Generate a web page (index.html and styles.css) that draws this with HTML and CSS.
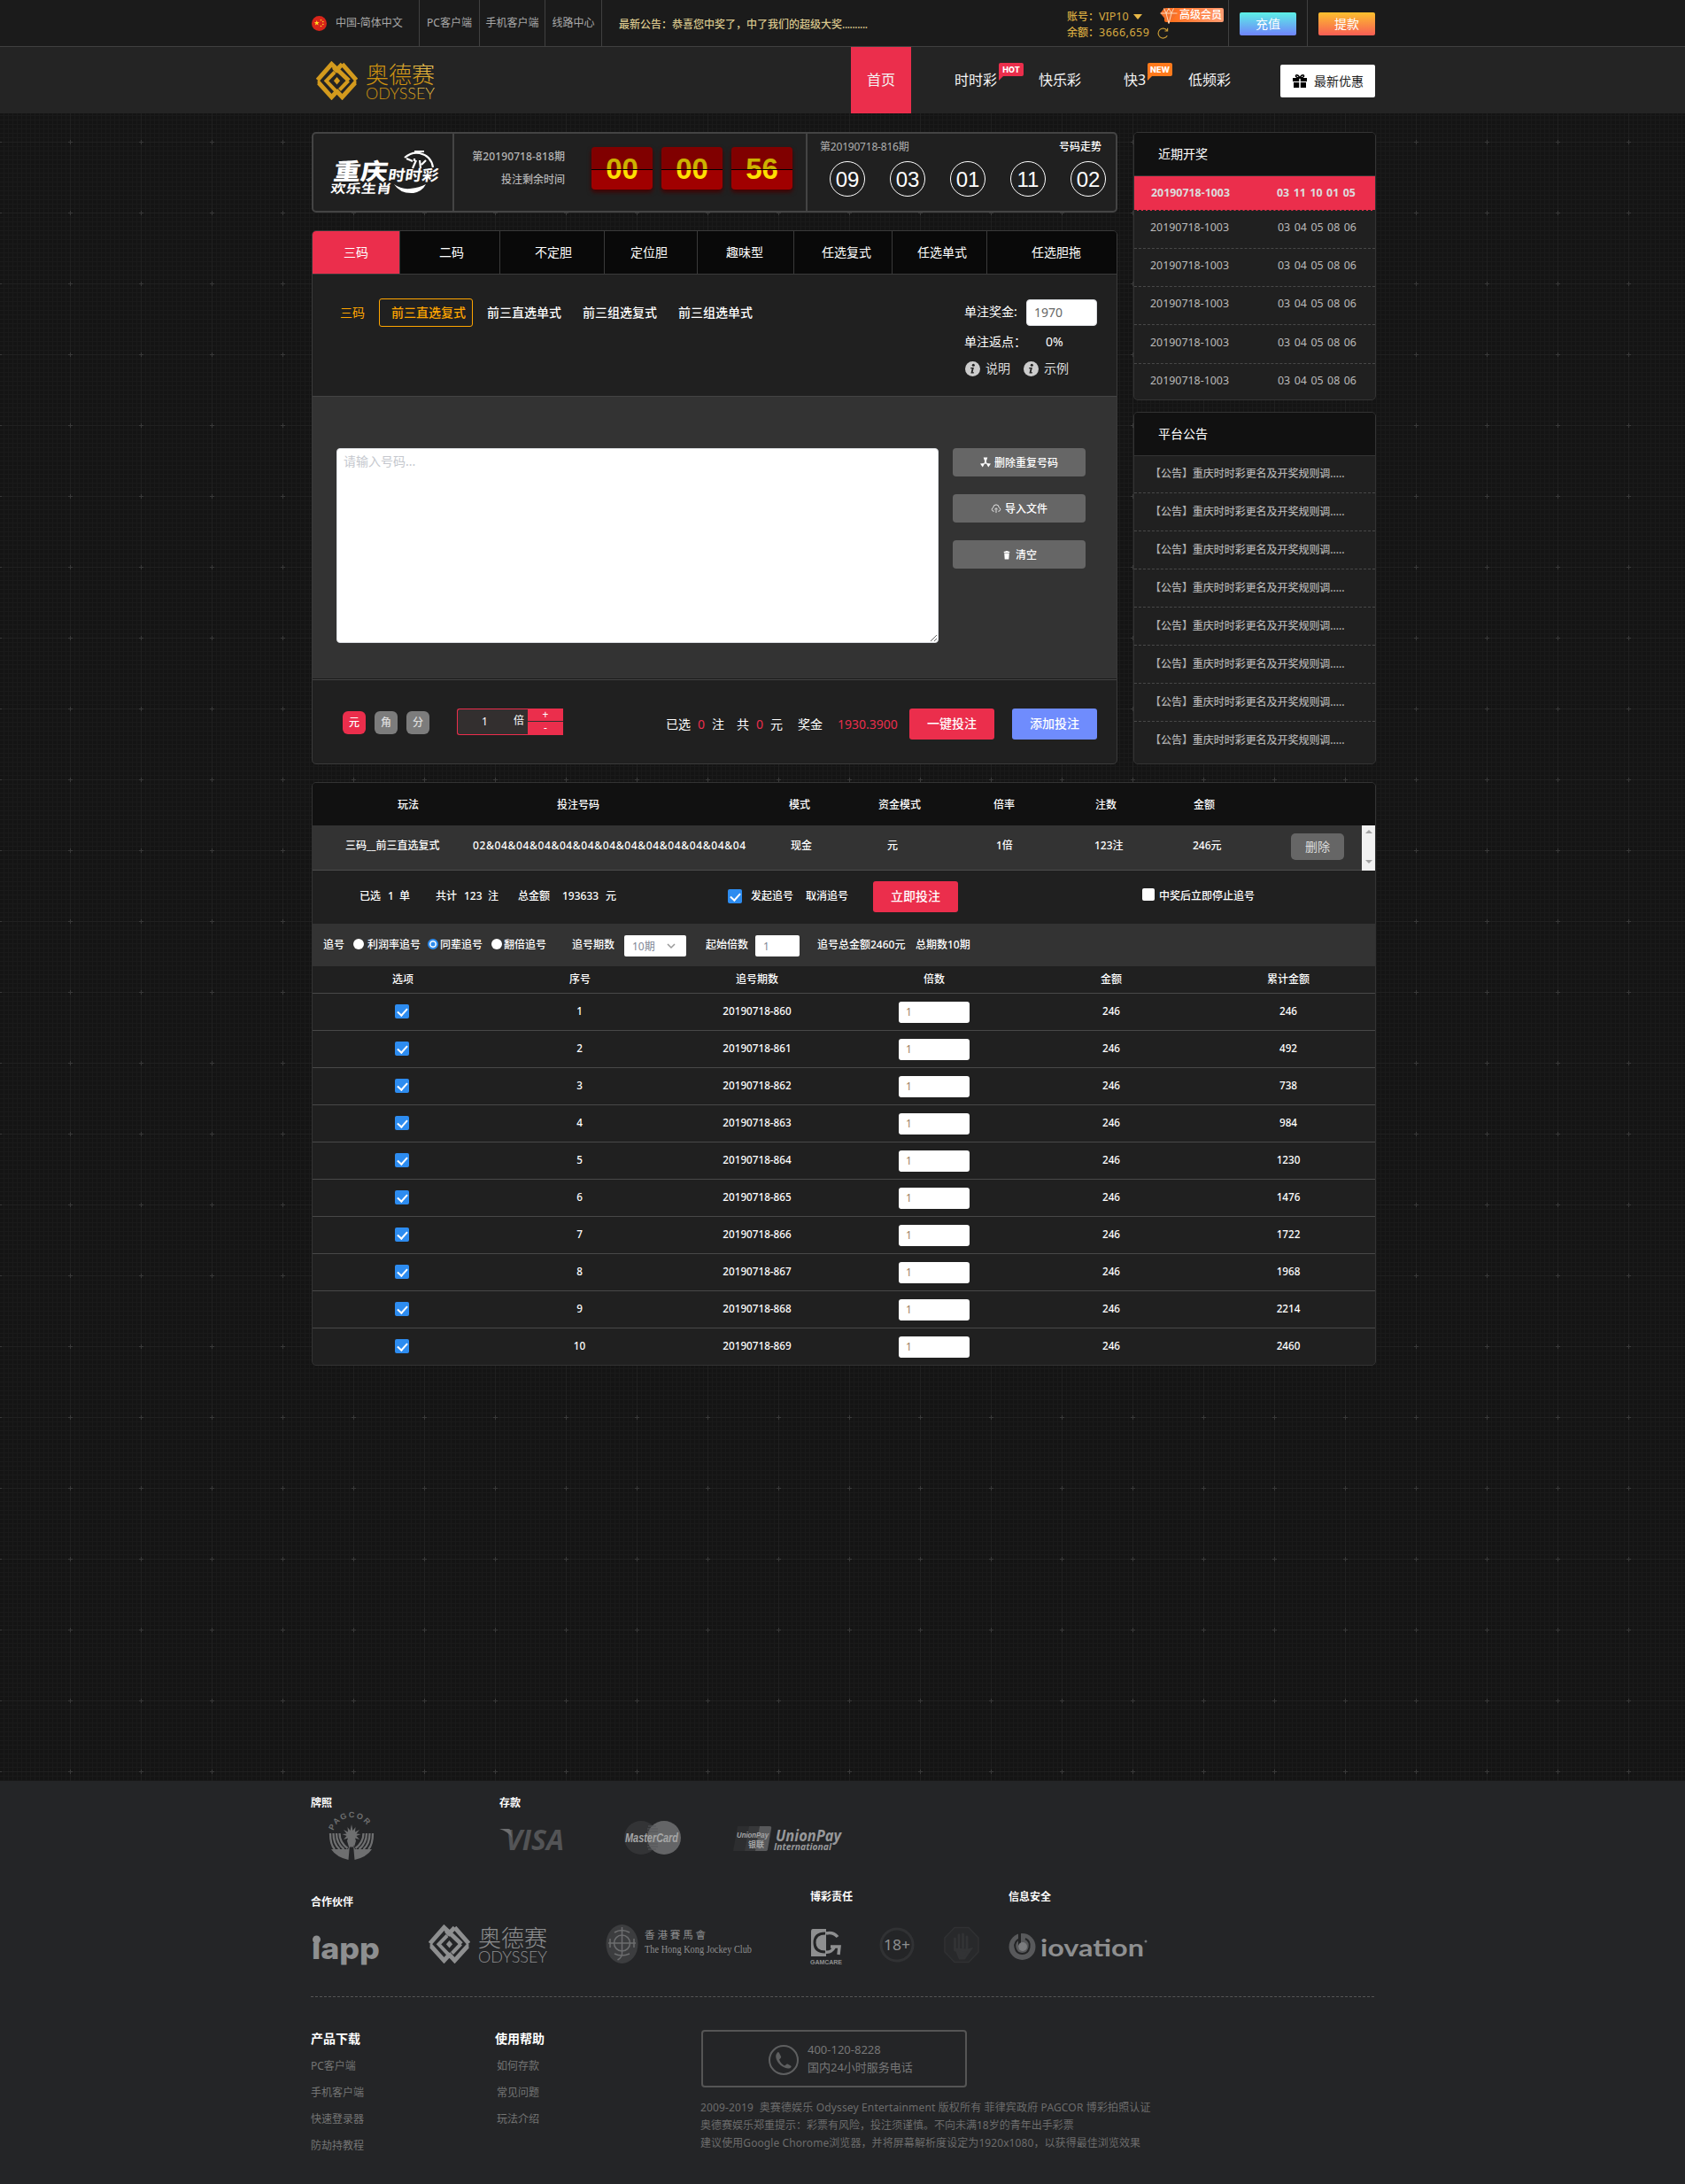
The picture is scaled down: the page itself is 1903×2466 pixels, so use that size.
FILE: index.html
```html
<!DOCTYPE html>
<html lang="zh-CN">
<head>
<meta charset="utf-8">
<title>奥德赛</title>
<link rel="stylesheet" href="styles.css">
</head>
<body>
<svg class="defs" width="0" height="0">
  <defs>
    <linearGradient id="gold" x1="0" y1="1" x2="1" y2="0"><stop offset="0.5" stop-color="#cf920f"/><stop offset="1" stop-color="#f7d774"/></linearGradient>
    <symbol id="mark" viewBox="0 0 47 44">
      <path fill="none" stroke="currentColor" stroke-width="5" d="M1.6 21.4 17.5 3.4 37 22 M20 7 23.500 11.500M29.500 3.400 45.400 21.400M21.500 12 29.500 3.400M1.600 24.600H3L17.500 40.600 24.500 33M22.500 33 29.500 40.600 44 24.600h1.400"/>
      <path fill="none" stroke="currentColor" stroke-width="4" d="M21 12.500 11.500 22.300 24 35.500M36.500 22 26.500 32.500"/>
      <path fill="currentColor" d="m23.500 18 3.600 4.200-3.600 4.200-3.600-4.200z"/>
    </symbol>
    <symbol id="info" viewBox="0 0 17 17"><circle cx="8.500" cy="8.500" r="8.500" fill="#ccc"/><circle cx="9.300" cy="4.300" r="1.500" fill="#222"/><path d="M6.300 7h3.600l-1.300 5.200h1.400l-.3 1.200H6.400l1.300-5.200H6z" fill="#222"/></symbol>
  </defs>
</svg>

<header>
  <div class="topbar">
    <div class="topbar-in">
      <div class="cell lang">
        <svg width="17" height="17" viewBox="0 0 17 17"><circle cx="8.500" cy="8.500" r="8.500" fill="#d8251a"/><path fill="#ffde22" d="m5.700 4.900.8 2 2.200.1-1.700 1.300.6 2.100-1.900-1.200-1.800 1.200.6-2.100L2.800 7 5 6.900z"/><g fill="#ffde22"><circle cx="10.500" cy="4.800" r=".8"/><circle cx="12.800" cy="6.500" r=".8"/><circle cx="12.800" cy="9.500" r=".8"/><circle cx="10.500" cy="11.500" r=".8"/></g></svg>
        <span>中国-简体中文</span>
      </div>
      <div class="cell">PC客户端</div>
      <div class="cell">手机客户端</div>
      <div class="cell">线路中心</div>
      <div class="notice">最新公告：恭喜您中奖了，中了我们的超级大奖<span>..........</span></div>
      <div class="cell account">
        <div>账号：<b>VIP10</b><i class="caret"></i></div>
        <div>余额：<b class="money">3666,659</b><svg width="13" height="13" viewBox="0 0 13 13"><path d="M11.300 9.300A5.500 5.500 0 1 1 11 3.300M11.600.8v3.200H8.400" fill="none" stroke="#c99c36" stroke-width="1.200"/></svg></div>
        <span class="member"><svg width="20" height="18" viewBox="0 0 20 18"><path d="M4.500.5h11L19.500 6 10 17.500.5 6z" fill="#f3702c"/><path d="M.5 6h19M4.500.5 7 6l3 11.500L13 6l2.500-5.500M7 6l3-5.500L13 6" fill="none" stroke="#ffd9b8"/></svg>高级会员</span>
      </div>
      <div class="cell"><a class="pill recharge">充值</a></div>
      <div class="cell last"><a class="pill withdraw">提款</a></div>
    </div>
  </div>
  <nav class="nav">
    <div class="nav-in">
      <svg class="logo" width="140" height="46" viewBox="0 0 140 46">
        <g color="#d39a1d"><use href="#mark" x="0" y="1" width="47" height="44"/></g>
        <text x="56" y="26" font-size="26" textLength="78" fill="url(#gold)" class="thin">奥德赛</text>
        <text x="56" y="44" font-size="17" textLength="78" lengthAdjust="spacingAndGlyphs" fill="url(#gold)" class="lato thin">ODYSSEY</text>
      </svg>
      <a class="active">首页</a>
      <a class="first">时时彩<span class="flag hot">HOT</span></a>
      <a>快乐彩</a>
      <a>快3<span class="flag new">NEW</span></a>
      <a>低频彩</a>
      <a class="promo"><svg width="16" height="15" viewBox="0 0 16 15"><path d="M0 4h7.200v4H0zM8.800 4H16v4H8.800zM1 9h6.200v6H1zM8.800 9H15v6H8.800z"/><path d="M7.500 4C3 4 2.500.8 4.500.8S7.500 3 8 4c.5-1 1.500-3.200 3.500-3.200S13 4 8.500 4" fill="none" stroke="#000" stroke-width="1.400"/></svg>最新优惠</a>
    </div>
  </nav>
</header>

<main>
  <div class="columns">
    <div class="left">
      <section class="draw">
        <div class="draw-logo">
          <svg width="126" height="56" viewBox="0 0 126 56" fill="#fff">
            <g transform="skewX(-8)"><text x="10" y="36.500" font-size="26" font-weight="900" textLength="61" lengthAdjust="spacingAndGlyphs">重庆</text><text x="72" y="37" font-size="17" font-weight="700" textLength="57" lengthAdjust="spacingAndGlyphs">时时彩</text><text x="9" y="51" font-size="14" font-weight="700" textLength="69" lengthAdjust="spacingAndGlyphs">欢乐生肖</text></g>
            <path d="M74 41q8 6 18 5 11-1 18-5-4 8-14 10-15 1-22-10z"/>
            <path d="M86 11Q94 4 103 6 116 9 118 22M97 4h11M88 12l7 3M97 12v3M99 14l-4 9M103 14l1 9M110 14l-5 5" fill="none" stroke="#fff" stroke-width="2.200"/>
          </svg>
        </div>
        <div class="draw-time">
          <div class="issue"><p>第20190718-818期</p><p>投注剩余时间</p></div>
          <div class="flip"><span>00</span></div><div class="flip"><span>00</span></div><div class="flip"><span>56</span></div>
        </div>
        <div class="draw-result">
          <div class="result-head"><span>第20190718-816期</span><b>号码走势</b></div>
          <div class="balls"><i>09</i><i>03</i><i>01</i><i>11</i><i>02</i></div>
        </div>
      </section>

      <section class="bet">
        <div class="tabs"><a class="on">三码</a><a>二码</a><a>不定胆</a><a>定位胆</a><a>趣味型</a><a>任选复式</a><a>任选单式</a><a>任选胆拖</a></div>
        <div class="modes">
          <div class="mode-list"><span class="label">三码</span><a class="on">前三直选复式</a><a>前三直选单式</a><a>前三组选复式</a><a>前三组选单式</a></div>
          <div class="bonus">
            <div class="line1"><span>单注奖金:</span><span class="field">1970</span></div>
            <div class="line2"><span>单注返点：</span><span>0%</span></div>
            <div class="line3"><svg width="17" height="17"><use href="#info"/></svg><span>说明</span><svg width="17" height="17"><use href="#info"/></svg><span>示例</span></div>
          </div>
        </div>
        <div class="entry">
          <textarea placeholder="请输入号码..."></textarea>
          <div class="tools">
            <a><svg width="12" height="12" viewBox="0 0 13 12" fill="#fff"><circle cx="6.500" cy="6.500" r="1.500"/><path d="M4 0h5L7.300 5H5.700zM5.700 7 3 12 0 7.500zM7.300 7l2.700 5 3-4.500z"/></svg>删除重复号码</a>
            <a><svg width="12" height="11" viewBox="0 0 13 11" fill="none" stroke="#eee"><path d="M4 8.500H3.500A2.300 2.300 0 0 1 3 4a3.500 3.500 0 0 1 7 0 2.300 2.300 0 0 1-.5 4.500H9M6.500 10.500V5M4.500 6.500l2-2 2 2"/></svg>导入文件</a>
            <a><svg width="12" height="11" viewBox="0 0 13 11" fill="#fff"><path d="M3 1.500h2V.5h3v1h2V3H3zM3.500 3.500h6L9 11H4z"/></svg>清空</a>
          </div>
        </div>
        <div class="submit">
          <div class="units"><a class="on">元</a><a>角</a><a>分</a></div>
          <div class="stepper"><span>1</span><span>倍</span><div><i>+</i><i>-</i></div></div>
          <div class="total"><span>已选</span><em>0</em><span>注</span><span>共</span><em>0</em><span>元</span><span>奖金</span><em>1930.3900</em></div>
          <a class="btn red">一键投注</a><a class="btn blue">添加投注</a>
        </div>
      </section>
    </div>

    <aside class="right">
      <section class="recent">
        <h3>近期开奖</h3>
        <div class="hit"><span>20190718-1003</span><span>03 11 10 01 05</span></div>
        <div><span>20190718-1003</span><span>03 04 05 08 06</span></div>
        <div><span>20190718-1003</span><span>03 04 05 08 06</span></div>
        <div><span>20190718-1003</span><span>03 04 05 08 06</span></div>
        <div><span>20190718-1003</span><span>03 04 05 08 06</span></div>
        <div><span>20190718-1003</span><span>03 04 05 08 06</span></div>
      </section>
      <section class="news">
        <h3>平台公告</h3>
        <p>【公告】重庆时时彩更名及开奖规则调.....</p>
        <p>【公告】重庆时时彩更名及开奖规则调.....</p>
        <p>【公告】重庆时时彩更名及开奖规则调.....</p>
        <p>【公告】重庆时时彩更名及开奖规则调.....</p>
        <p>【公告】重庆时时彩更名及开奖规则调.....</p>
        <p>【公告】重庆时时彩更名及开奖规则调.....</p>
        <p>【公告】重庆时时彩更名及开奖规则调.....</p>
        <p>【公告】重庆时时彩更名及开奖规则调.....</p>
      </section>
    </aside>
  </div>

  <section class="orders">
    <div class="ord-head"><span>玩法</span><span>投注号码</span><span>模式</span><span>资金模式</span><span>倍率</span><span>注数</span><span>金额</span></div>
    <div class="ord-row"><span>三码__前三直选复式</span><span><svg width="309" height="20"><text x="0" y="14" textLength="308">02&amp;04&amp;04&amp;04&amp;04&amp;04&amp;04&amp;04&amp;04&amp;04&amp;04&amp;04&amp;04</text></svg></span><span>现金</span><span>元</span><span>1倍</span><span>123注</span><span>246元</span><a>删除</a><i class="scroll"></i></div>
    <div class="ord-sum"><span>已选</span><span>1</span><span>单</span><span>共计</span><span>123</span><span>注</span><span>总金额</span><span>193633</span><span>元</span><i class="check"></i><span>发起追号</span><span>取消追号</span><a class="btn red">立即投注</a><i class="box"></i><span>中奖后立即停止追号</span></div>
    <div class="ord-opt"><span>追号</span><i class="radio"></i><span>利润率追号</span><i class="radio sel"></i><span>同辈追号</span><i class="radio"></i><span>翻倍追号</span><span>追号期数</span><span class="select">10期<svg width="10" height="6" viewBox="0 0 10 6"><path d="m1 1 4 4 4-4" fill="none" stroke="#999" stroke-width="1.500"/></svg></span><span>起始倍数</span><span class="num">1</span><span>追号总金额2460元</span><span>总期数10期</span></div>
    <div class="chase head"><span>选项</span><span>序号</span><span>追号期数</span><span>倍数</span><span>金额</span><span>累计金额</span></div>
    <div class="chase"><i class="check"></i><span>1</span><span>20190718-860</span><span class="mult">1</span><span>246</span><span>246</span></div>
    <div class="chase"><i class="check"></i><span>2</span><span>20190718-861</span><span class="mult">1</span><span>246</span><span>492</span></div>
    <div class="chase"><i class="check"></i><span>3</span><span>20190718-862</span><span class="mult">1</span><span>246</span><span>738</span></div>
    <div class="chase"><i class="check"></i><span>4</span><span>20190718-863</span><span class="mult">1</span><span>246</span><span>984</span></div>
    <div class="chase"><i class="check"></i><span>5</span><span>20190718-864</span><span class="mult">1</span><span>246</span><span>1230</span></div>
    <div class="chase"><i class="check"></i><span>6</span><span>20190718-865</span><span class="mult">1</span><span>246</span><span>1476</span></div>
    <div class="chase"><i class="check"></i><span>7</span><span>20190718-866</span><span class="mult">1</span><span>246</span><span>1722</span></div>
    <div class="chase"><i class="check"></i><span>8</span><span>20190718-867</span><span class="mult">1</span><span>246</span><span>1968</span></div>
    <div class="chase"><i class="check"></i><span>9</span><span>20190718-868</span><span class="mult">1</span><span>246</span><span>2214</span></div>
    <div class="chase"><i class="check"></i><span>10</span><span>20190718-869</span><span class="mult">1</span><span>246</span><span>2460</span></div>
  </section>
</main>

<footer>
  <div class="foot-in">
    <div class="brands top">
      <div><h4>牌照</h4>
        <svg class="pagcor" width="54" height="54" viewBox="0 0 54 54">
          <path id="arc" d="M6 22A21.500 21.500 0 0 1 48 22" fill="none"/>
          <text font-size="9" font-weight="700" letter-spacing="1.600" fill="#6e6f70" class="latin"><textPath href="#arc" startOffset="2">PAGCOR</textPath></text>
          <path fill="#6e6f70" d="m27 13 1.500 7 3-4-.5 5.500 5-2.500-3.500 4.500 5 .5-5 2 3.500 4-5-1.500 1 3-2 7-6 0-2-7 1-3-5 1.500 3.500-4-5-2 5-.5-3.500-4.500 5 2.500-.5-5.500 3 4zM4 41l19 0 2-5-1.500 17Q10 50 4 41zM50 41H31l-2-5 1.500 17Q44 50 50 41z"/>
          <path fill="none" stroke="#6e6f70" stroke-width="2.300" d="M3 23q0 13 5 18M6.500 23q0 12 7 18M10 23q0 11 8.500 18M13.500 23q0 10 9 17M51 23q0 13-5 18M47.500 23q0 12-7 18M44 23q0 11-8.500 18M40.500 23q0 10-9 17"/>
        </svg>
      </div>
      <div><h4>存款</h4>
        <div class="logos">
          <svg width="74" height="26" viewBox="0 0 74 26"><text x="7" y="25" font-size="33" font-weight="700" font-style="italic" textLength="66" lengthAdjust="spacingAndGlyphs" fill="#535456" class="open">VISA</text><path d="M0 1h10q3 0 3 4l1 6Q10 4 0 1z" fill="#6d6e70"/></svg>
          <svg width="66" height="40" viewBox="0 0 66 40"><circle cx="20" cy="20" r="19" fill="#333436"/><circle cx="46" cy="20" r="19" fill="#646567"/><path d="M28 7h9M27 10h12M27 13h12M27 27h12M27 30h12M28 33h9" stroke="#55565a"/><text x="2" y="25" font-size="14" font-weight="700" font-style="italic" textLength="60" lengthAdjust="spacingAndGlyphs" fill="#a4a5a6" class="latin">MasterCard</text></svg>
          <svg width="126" height="32" viewBox="0 0 126 32"><path d="M6 2h16l-5 28H1z" fill="#2d2e30"/><path d="M19 2h14l-5 28H14z" fill="#37383a"/><path d="M31 2h11q3 0 2 3l-4 23q0 2-3 2H26z" fill="#58595b"/><text x="5" y="15" font-size="8.500" font-weight="700" font-style="italic" textLength="36" lengthAdjust="spacingAndGlyphs" fill="#a4a5a6" class="latin">UnionPay</text><text x="18" y="26" font-size="9" font-weight="700" textLength="18" fill="#a4a5a6">银联</text><text x="49" y="19" font-size="18" font-weight="700" font-style="italic" textLength="74" lengthAdjust="spacingAndGlyphs" fill="#97989a" class="open">UnionPay</text><text x="47" y="29" font-size="10.500" font-weight="700" font-style="italic" textLength="65" lengthAdjust="spacingAndGlyphs" fill="#97989a" class="open">International</text></svg>
        </div>
      </div>
    </div>
    <div class="brands mid">
      <div class="partner"><h4>合作伙伴</h4>
        <div class="logos">
          <svg width="78" height="34" viewBox="0 0 78 34"><circle cx="5.500" cy="4" r="4.500" fill="#8e8f90"/><text x="0" y="26" font-size="33" font-weight="800" textLength="77" lengthAdjust="spacingAndGlyphs" fill="#8e8f90" class="inter">ıapp</text></svg>
          <svg width="136" height="46" viewBox="0 0 136 46"><g color="#8e8f90"><use href="#mark" x="0" y="1" width="47" height="44"/></g><text x="56" y="26" font-size="26" textLength="78" fill="#8e8f90" class="thin">奥德赛</text><text x="56" y="44" font-size="17" textLength="78" lengthAdjust="spacingAndGlyphs" fill="#8e8f90" class="lato thin">ODYSSEY</text></svg>
          <svg width="168" height="46" viewBox="0 0 168 46"><ellipse cx="18.500" cy="23" rx="18" ry="22" fill="#3c3d3f"/><g fill="none" stroke="#6c6d6f" stroke-width="1.500"><circle cx="18.500" cy="22" r="9"/><path d="M18.500 4v30q0 4-5 7M3 22h31M5 17v10M32 17v10M10 10q8-5 17 0M10 34q8 4 17 0"/></g><text x="44" y="17" font-size="11.500" textLength="69" fill="#8e8f90" class="hant">香港賽馬會</text><text x="44" y="33" font-size="13" textLength="121" lengthAdjust="spacingAndGlyphs" fill="#8e8f90" class="serif">The Hong Kong Jockey Club</text></svg>
        </div>
      </div>
      <div class="duty"><h4>博彩责任</h4>
        <div class="logos">
          <svg width="38" height="42" viewBox="0 0 38 42"><path d="M3 1h15v31H1V4q0-3 2-3z" fill="#8e8f90"/><path d="M17 6Q5 6 5 16.500T17 27" fill="none" stroke="#232425" stroke-width="3"/><path d="M18 6q8-2 13 4M17 27q7 1 10-5M23 21h10l-1 9" fill="none" stroke="#8e8f90" stroke-width="3.500"/><text x="0" y="41" font-size="8" font-weight="700" textLength="36" lengthAdjust="spacingAndGlyphs" fill="#8e8f90" class="latin">GAMCARE</text></svg>
          <svg width="40" height="42" viewBox="0 0 40 42"><circle cx="20" cy="21" r="18" fill="none" stroke="#313234" stroke-width="3"/><text x="5" y="27" font-size="17" textLength="30" lengthAdjust="spacingAndGlyphs" fill="#8e8f90">18+</text></svg>
          <svg width="40" height="42" viewBox="0 0 40 42"><path d="M12 1.500h16L39 13v16L28 40.500H12L1 29V13z" fill="#28292b" stroke="#303133" stroke-width="1.500"/><path d="M12.500 27V14M17 24V10M21.500 24V9M26 25V12M14 26l4 10h5l7-10-4 1z" fill="#323335" stroke="#323335" stroke-width="2.800" stroke-linecap="round"/></svg>
        </div>
      </div>
      <div class="safe"><h4>信息安全</h4>
        <svg width="158" height="34" viewBox="0 0 158 34"><circle cx="15.500" cy="17" r="15" fill="#58595b"/><path d="M13 8Q6 11 7.500 18T15.500 25 23.500 18 19 8" fill="none" stroke="#232425" stroke-width="2"/><path d="M11 1h3v18h-3z" fill="#232425"/><circle cx="16" cy="17" r="5" fill="#7b7c7e"/><text x="36" y="28" font-size="27" font-weight="700" textLength="117" lengthAdjust="spacingAndGlyphs" fill="#8e8f90" class="lato">iovation</text><circle cx="155" cy="11" r="1.500" fill="#77787a"/></svg>
      </div>
    </div>
    <div class="foot-bottom">
      <div class="links"><h5>产品下载</h5><a>PC客户端</a><a>手机客户端</a><a>快速登录器</a><a>防劫持教程</a></div>
      <div class="links help"><h5>使用帮助</h5><a>如何存款</a><a>常见问题</a><a>玩法介绍</a></div>
      <div class="contact">
        <div class="phone"><svg width="34" height="34" viewBox="0 0 34 34"><circle cx="17" cy="17" r="16" fill="none" stroke="#5e5f60" stroke-width="2"/><path d="M10 8.500q-3 3-1 8t7 8 8.500 1.500q2-1.500.5-2.500l-3.500-2q-1-.5-2 1l-1.500 1q-4-2-6-7l1.500-1.500q1-1 .5-2L12 9q-1-1.500-2-.5z" fill="#5e5f60"/></svg><div><p>400-120-8228</p><p>国内24小时服务电话</p></div></div>
        <p class="rights">2009-2019&nbsp; 奥赛德娱乐 Odyssey Entertainment 版权所有 菲律宾政府 PAGCOR 博彩拍照认证</p>
        <p>奥德赛娱乐郑重提示：彩票有风险，投注须谨慎。不向未满18岁的青年出手彩票</p>
        <p class="browser">建议使用Google Chorome浏览器，并将屏幕解析度设定为1920x1080，以获得最佳浏览效果</p>
      </div>
    </div>
  </div>
</footer>
</body>
</html>
```
FILE: styles.css
```css
* { box-sizing: border-box; margin: 0; padding: 0; }
body {
  font: 12px/20px "Noto Sans", "Noto Sans CJK SC", sans-serif;
  color: #fff;
  white-space: nowrap;
  background: #141414 url("data:image/svg+xml,%3Csvg xmlns='http://www.w3.org/2000/svg' width='80' height='80'%3E%3Cdefs%3E%3Cpattern id='p' width='5' height='5' patternUnits='userSpaceOnUse'%3E%3Cpath d='M0 0h5v1H0zM4 0h1v5H4z' fill='%231a1a1a'/%3E%3C/pattern%3E%3C/defs%3E%3Cpath fill='url(%23p)' d='M0 0h80v80H0z'/%3E%3Cpath d='M0 0h80v1H0zM79 0h1v80h-1z' fill='%23202020'/%3E%3Cpath d='M77 0h3v1h-3zM0 0h2v1H0zM79 0h1v3h-1zM79 78h1v2h-1z' fill='%233a3a3a'/%3E%3C/svg%3E") 0 0 / 80px 80px;
}
i, em { font-style: normal; }
.defs { position: absolute; }
svg { display: block; flex: none; overflow: visible; }
.latin { font-family: "Liberation Sans", sans-serif; }
.open { font-family: "Open Sans", sans-serif; }
.inter { font-family: Inter, sans-serif; }
.lato { font-family: Lato, sans-serif; }
.serif { font-family: "Liberation Serif", serif; }
.hant { font-family: "Noto Sans CJK TC", sans-serif; }
.thin { font-weight: 300; }

/* top bar */
.topbar { height: 53px; background: #1b1b1b; border-bottom: 1px solid #404040; color: #a9a9a9; }
.topbar-in { margin-left: 352px; display: grid; grid-template-columns: 122px 68px 74px 64px 525px 183px 89px 76px; height: 52px; }
.cell { display: flex; align-items: center; justify-content: center; border-right: 1px solid #404040; }
.cell.last { border: 0; justify-content: flex-end; }
.cell.lang { justify-content: flex-start; gap: 10px; }
.notice { padding: 18px 0 0 19px; color: #d8c68c; font-weight: 500; }
.notice span { letter-spacing: -.4px; }
.cell.account { position: relative; flex-direction: column; align-items: flex-start; justify-content: flex-start; padding-top: 10px; color: #d9ab41; line-height: 18px; font-weight: 500; }
.account div { display: flex; align-items: center; }
.account b { font-weight: 400; font-size: 12.5px; }
.account .money { width: 57px; letter-spacing: .5px; margin-right: 9px; }
.caret { border: 5px solid transparent; border-top: 6px solid #e8b847; border-bottom: 0; margin-left: 5px; }
.member { position: absolute; left: 110px; top: 9px; width: 67px; height: 16px; border-radius: 2px; padding-left: 17px; color: #fff; font-weight: 500; line-height: 16px; font-size: 12px; background: linear-gradient(90deg, #ff6a12, #ff9c72); }
.member svg { position: absolute; left: -5px; top: 0; }
.pill { width: 64px; height: 26px; margin-top: 2px; border-radius: 2px; font-size: 14px; line-height: 26px; text-align: center; color: #fff; }
.recharge { background: linear-gradient(#5cf0e6, #7083fb); }
.withdraw { background: linear-gradient(#fcc02e, #f85d55); }

/* navigation */
.nav { height: 75px; background: #242424; }
.nav-in { margin-left: 352px; height: 75px; display: grid; grid-template-columns: 609px 68px 144px 96px 73px 104px 107px; font-size: 16px; line-height: 75px; }
.logo { margin: 15px 0 0 5px; }
.nav .active { background: #eb2e4c; text-align: center; }
.nav .first { padding-left: 49px; }
.nav a { color: #f4f4f4; position: relative; }
.flag { position: absolute; top: 18px; width: 28px; height: 15px; border-radius: 2px; font: 800 9px/15px Inter, sans-serif; text-align: center; }
.flag::after { content: ""; position: absolute; left: 0; top: 14px; border: 3px solid; border-right-color: transparent; border-bottom-color: transparent; }
.hot { left: 99px; background: #eb2e4c; color: #fff; }
.new { left: 27px; background: #ff7a1c; color: #fff; }
.hot::after { border-top-color: #eb2e4c; border-left-color: #eb2e4c; }
.new::after { border-top-color: #ff7a1c; border-left-color: #ff7a1c; }
.nav .promo { align-self: start; margin-top: 20px; height: 37px; background: #fff; border-radius: 2px; color: #222; font-size: 14px; line-height: 36px; display: flex; align-items: center; gap: 8px; padding-left: 14px; }

main { height: 1883px; padding: 21px 0 0 352px; }
.columns { display: flex; gap: 18px; }
.left { width: 910px; display: flex; flex-direction: column; gap: 20px; }
.right { width: 274px; display: flex; flex-direction: column; gap: 13px; }

/* current draw */
.draw { height: 91px; border: 2px solid #444; border-radius: 5px; background: #202020; display: grid; grid-template-columns: 159px 399px 348px; }
.draw-logo { border-right: 2px solid #444; padding: 16px 0 0 17px; }
.draw-time { border-right: 2px solid #444; display: flex; }
.issue { width: 125px; margin-right: 30px; padding-top: 15px; text-align: right; color: #b5b5b5; font-weight: 500; }
.issue p { height: 26px; line-height: 22px; }
.issue p:first-child { letter-spacing: .1px; }
.flip { position: relative; width: 69px; height: 48px; margin: 15px 10px 0 0; border-radius: 4px; background: #a00000; box-shadow: 0 3px 5px #400; text-align: center; color: #ffdf00; font: bold 33px/49px "Liberation Sans", sans-serif; overflow: hidden; }
.flip::after { content: ""; position: absolute; inset: 0 0 auto; height: 25px; background: rgba(0,0,0,.2); border-bottom: 1px solid #000; }
.result-head { display: flex; justify-content: space-between; padding: 5px 16px 0 14px; height: 24px; color: #b0b0b0; }
.result-head span { letter-spacing: -.2px; }
.result-head b { color: #fff; font-weight: 500; }
.balls { display: flex; gap: 28px; padding: 7px 0 0 25px; }
.balls i { width: 40px; height: 40px; border: 1px solid #fff; border-radius: 50%; text-align: center; font: 24px/39px "Liberation Sans", sans-serif; }

/* bet panel */
.bet { height: 603px; border: 1px solid #3a3a3a; border-radius: 5px; background: #202020; overflow: hidden; font-size: 14px; }
.tabs { display: grid; grid-template-columns: 99px 113px 118px 105px 109px 111px 107px 146px; height: 49px; line-height: 48px; background: #090909; border-bottom: 1px solid #3a3a3a; }
.tabs a { border-right: 1px solid #3a3a3a; padding-left: 31px; }
.tabs a:first-child { padding-left: 35px; background: #eb2e4c; }
.tabs a:nth-child(2) { padding-left: 44px; }
.tabs a:nth-child(3) { padding-left: 39px; }
.tabs a:nth-child(4) { padding-left: 29px; }
.tabs a:nth-child(5) { padding-left: 32px; }
.tabs a:nth-child(7) { padding-left: 28px; }
.tabs a:last-child { padding-left: 50px; border: 0; }
.modes { display: flex; justify-content: space-between; height: 138px; border-bottom: 1px solid #444; padding: 27px 22px 0 31px; }
.mode-list { display: flex; height: 32px; line-height: 31px; }
.mode-list a { width: 108px; padding-left: 15px; font-weight: 500; }
.mode-list .label { width: 44px; color: #ffa500; }
.mode-list .on { width: 106px; margin-right: 1px; border: 1px solid #ffa500; border-radius: 3px; padding-left: 13px; line-height: 29px; color: #ffa500; }
.bonus { width: 150px; padding-top: 1px; }
.bonus div { display: flex; }
.line1 > span:first-child { width: 70px; line-height: 28px; }
.field { width: 80px; height: 30px; border-radius: 4px; background: #fff; border: 1px solid #dcdee2; color: #666; padding-left: 8px; line-height: 28px; }
.line2 { padding-top: 8px; }
.line2 span:first-child { width: 92px; }
.line3 { padding: 12px 0 0 1px; color: #ddd; line-height: 16px; }
.line3 span { width: 43px; margin-left: 6px; }
.entry { height: 319px; border-bottom: 1px solid #1c1c1c; background: #333; padding: 58px 0 0 27px; display: flex; gap: 16px; }
.entry textarea { width: 680px; height: 220px; border: 1px solid #dcdee2; border-radius: 4px; background: #fff; padding: 4px 7px; font: inherit; }
.entry textarea::placeholder { color: #c5c8ce; }
.tools { display: grid; grid-auto-rows: 32px; gap: 20px; width: 150px; }
.tools a { background: #666; border-radius: 4px; font-size: 12px; font-weight: 500; line-height: 31px; display: flex; align-items: center; justify-content: center; gap: 4px; }
.submit { border-top: 1px solid #444; height: 95px; display: flex; padding-left: 34px; }
.units { display: flex; gap: 10px; padding-top: 35px; width: 129px; }
.units a { width: 26px; height: 26px; border-radius: 6px; background: #7c7c7c; color: #ddd; font-size: 12px; font-weight: 500; line-height: 25px; text-align: center; }
.units .on { background: #eb2e4c; color: #fff; }
.stepper { display: flex; width: 120px; height: 30px; margin-top: 32px; border: 1px solid #eb2e4c; border-right: 0; border-radius: 3px 0 0 3px; background: #332f2f; font-size: 12px; line-height: 28px; }
.stepper > span { width: 36px; padding-left: 27px; }
.stepper > span:nth-child(2) { width: 43px; padding-left: 27px; line-height: 26px; }
.stepper div { width: 40px; display: flex; flex-direction: column; gap: 1px; margin-top: -1px; }
.stepper i { height: 14.5px; background: #eb2e4c; text-align: center; line-height: 13px; }
.total { margin-left: 116px; width: 275px; padding-top: 40px; display: grid; grid-template-columns: 36px 16px 28px 22px 16px 31px 45px 81px; }
.total em { color: #eb2e4c; }
.btn { width: 96px; height: 35px; border-radius: 3px; text-align: center; font-size: 14px; font-weight: 500; line-height: 33px; color: #fff; }
.submit .btn { margin: 32px 20px 0 0; }
.red { background: #eb2e4c; }
.blue { background: #6f8cfd; }

/* side panels */
.recent, .news { border: 1px solid #333; border-radius: 5px; background: #202020; overflow: hidden; }
.recent { height: 303px; }
.news { height: 398px; }
h3 { height: 49px; background: #111; border-bottom: 1px solid #333; padding-left: 27px; font-size: 14px; font-weight: 400; line-height: 48px; }
.recent div { height: 43px; padding: 9px 0 0 18px; border-bottom: 1px dashed #484848; display: grid; grid-template-columns: 144px 1fr; font-size: 12.4px; color: #bbb; }
.recent div span:last-child { word-spacing: 1.3px; }
.recent div.hit { height: 39px; padding-top: 9px; background: #eb2e4c; border-color: #202020; font-weight: 700; color: #dcdcdc; grid-template-columns: 142px 1fr; padding-left: 19px; }
.recent div:last-child, .news p:last-child { border: 0; }
.recent div:nth-child(6) { height: 44px; padding-top: 10px; }
.news p { height: 43px; padding: 11px 0 0 18px; border-bottom: 1px dashed #484848; color: #b0b0b0; font-weight: 500; letter-spacing: -.04px; }
.news p:nth-child(2) { height: 42px; padding-top: 10px; }

/* orders */
.orders { width: 1202px; height: 659px; margin-top: 20px; border: 1px solid #333; border-radius: 5px; background: #202020; overflow: hidden; font-weight: 500; }
.ord-head { height: 48px; background: #111; display: grid; padding-left: 96px; grid-template-columns: 180px 262px 101px 130px 115px 111px 60px; line-height: 49px; }
.ord-row { height: 51px; background: #333; border-bottom: 1px solid #4c4c4c; display: grid; padding-left: 37px; grid-template-columns: 144px 359px 109px 123px 111px 111px 111px 80px 15px; line-height: 45px; }
.ord-row svg { margin-top: 13px; fill: #fff; }
.ord-row a { width: 60px; height: 30px; margin-top: 9px; border-radius: 5px; background: #666; color: #ddd; font-size: 14px; line-height: 29px; text-align: center; font-weight: 400; }
.scroll { position: relative; height: 51px; background: #f1f1f1; }
.scroll::before, .scroll::after { content: ""; position: absolute; left: 4px; top: 5px; border: 4px solid transparent; border-top: 0; border-bottom: 4px solid #a3a3a3; }
.scroll::after { top: 39px; border-bottom: 0; border-top: 4px solid #a3a3a3; }
.ord-sum { height: 60px; display: grid; padding-left: 53px; line-height: 58px; grid-template-columns: 32px 13px 41px 32px 27px 34px 50px 49px 138px 26px 62px 76px 304px 19px 1fr; }
.ord-sum .btn { margin-top: 12px; line-height: 33px; }
.check { display: block; width: 16px; height: 16px; border-radius: 2px; background: #2d8cf0; position: relative; }
.check::after { content: ""; position: absolute; left: 5px; top: 2px; width: 5px; height: 9px; border: solid #fff; border-width: 0 2px 2px 0; transform: rotate(42deg); }
.ord-sum .check { margin-top: 21px; }
.box { width: 14px; height: 14px; margin-top: 20px; border-radius: 2px; background: #fff; }
.ord-opt { height: 48px; background: #333; display: grid; padding-left: 12px; line-height: 48px; grid-template-columns: 34px 16px 68px 14px 58px 14px 77px 59px 92px 56px 70px 111px 1fr; }
.radio { width: 12px; height: 12px; margin-top: 17px; border-radius: 50%; background: #fff; }
.radio.sel { border: 2px solid #2d8cf0; box-shadow: inset 0 0 0 1.5px #fff; background: #2d8cf0; }
.select, .num { display: flex; justify-content: space-between; align-items: center; margin-top: 13px; height: 24px; border-radius: 2px; background: #fff; color: #808695; line-height: 23px; font-weight: 400; }
.select { width: 70px; padding: 0 12px 0 9px; }
.num { width: 50px; padding-left: 9px; }
.chase { display: grid; grid-template-columns: repeat(6, 200px); height: 42px; border-bottom: 1px solid #484848; line-height: 38px; text-align: center; font-size: 11.7px; }
.chase:last-child { border: 0; }
.chase > span:nth-child(2) { padding-left: 3px; }
.chase > span:nth-child(n+3) { padding-left: 4px; }
.chase.head { height: 31px; line-height: 29px; font-size: 12px; padding-left: 2px; }
.chase.head > span { padding: 0; }
.chase .check { margin: 12px 0 0 93px; }
.chase > span.mult { width: 80px; height: 24px; margin: 9px 0 0 62px; border-radius: 3px; background: #fff; color: #a08060; font-size: 12px; font-weight: 400; text-align: left; padding-left: 8px; line-height: 23px; }

/* footer */
footer { height: 455px; background: #242527; }
.foot-in { margin-left: 351px; width: 1202px; }
.foot-in h4 { font-size: 12px; font-weight: 700; line-height: 20px; }
.brands { display: grid; }
.brands.top { grid-template-columns: 213px 1fr; padding-top: 15px; height: 112px; }
.pagcor { margin: 1px 0 0 19px; }
.logos { display: flex; align-items: flex-start; }
.top .logos { padding-top: 9px; }
.top .logos svg:nth-child(1) { margin: 9px 66px 0 0; }
.top .logos svg:nth-child(2) { margin-right: 57px; }
.top .logos svg:nth-child(3) { margin-top: 5px; }
.brands.mid { grid-template-columns: 564px 224px 1fr; padding-top: 9px; height: 132px; border-bottom: 1px dashed #555; margin-right: 1px; }
.partner { padding-top: 6px; }
.partner .logos { padding-top: 14px; }
.partner svg:nth-child(1) { margin: 14px 54px 0 1px; }
.partner svg:nth-child(2) { margin-right: 64px; }
.duty .logos { padding-top: 23px; gap: 34px; }
.duty .logos svg:first-child { margin: 2px 6px 0 0; }
.duty .logos svg:last-child { margin-left: -1px; }
.safe svg { margin-top: 29px; }
.foot-bottom { display: grid; grid-template-columns: 208px 232px 1fr; color: #757575; padding-top: 37px; }
.links h5 { font-size: 14px; font-weight: 700; line-height: 20px; color: #fff; margin-bottom: 6px; }
.links a { display: block; height: 30px; line-height: 30px; }
.help a { padding-left: 2px; }
.contact p { line-height: 20px; color: #6c6c6c; }
.contact .rights { letter-spacing: .15px; }
.contact .browser { letter-spacing: .08px; }
.phone { width: 300px; height: 65px; margin: 0 0 13px 1px; border: 2px solid #555; border-radius: 4px; display: flex; gap: 10px; padding: 15px 0 0 74px; }
.contact .phone p { font-size: 13px; color: #777; }
.phone div { margin-top: -5px; }
```
